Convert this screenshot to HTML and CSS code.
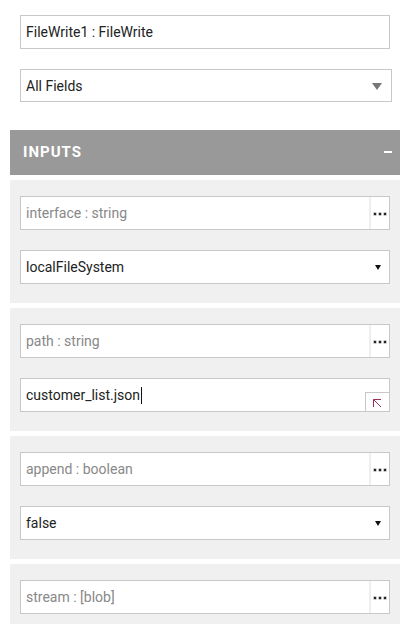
FILE: index.html
```html
<!DOCTYPE html>
<html>
<head>
<meta charset="utf-8">
<link rel="stylesheet" href="styles.css">
</head>
<body>
<div class="page">
  <div class="top">
    <div class="field name-field"><span class="value">FileWrite1 : FileWrite</span></div>
    <div class="field filter-select"><span class="value">All Fields</span><span class="big-arrow"></span></div>
  </div>
  <div class="header"><span class="title">INPUTS</span><span class="minus"></span></div>
  <div class="section">
    <div class="field with-btn"><span class="placeholder">interface : string</span><span class="dots-btn"><i></i><i></i><i></i></span></div>
    <div class="field select"><span class="value">localFileSystem</span><span class="small-arrow"></span></div>
  </div>
  <div class="section">
    <div class="field with-btn"><span class="placeholder">path : string</span><span class="dots-btn"><i></i><i></i><i></i></span></div>
    <div class="field textarea"><span class="value">customer_list.json</span><span class="caret"></span>
      <span class="expand-btn"><svg width="9" height="9" viewBox="0 0 9 9"><path d="M0.5 0.5H8M0.5 0.5V8M0.5 0.5L8 8" fill="none" stroke="#9a2f5e" stroke-width="1"/></svg></span>
    </div>
  </div>
  <div class="section">
    <div class="field with-btn"><span class="placeholder">append : boolean</span><span class="dots-btn"><i></i><i></i><i></i></span></div>
    <div class="field select"><span class="value">false</span><span class="small-arrow"></span></div>
  </div>
  <div class="section last">
    <div class="field with-btn"><span class="placeholder">stream : [blob]</span><span class="dots-btn"><i></i><i></i><i></i></span></div>
  </div>
</div>
</body>
</html>
```
FILE: styles.css
```css
html, body {
  margin: 0;
  padding: 0;
  background: #fff;
}
body {
  font-family: Roboto, "Liberation Sans", Arial, sans-serif;
  font-size: 14px;
  color: #222;
}
.page {
  width: 390px;
  padding: 15px 10px 0 10px;
}
.top {
  padding: 0 10px;
  display: flex;
  flex-direction: column;
  gap: 20px;
  margin-bottom: 28px;
}
.field {
  position: relative;
  box-sizing: border-box;
  height: 34px;
  border: 1px solid #c8c8c8;
  background: #fff;
  display: flex;
  align-items: center;
  padding-left: 5px;
}
.name-field {
  width: 370px;
}
.filter-select {
  width: 372px;
  height: 33px;
  justify-content: space-between;
  padding-right: 9px;
}
.big-arrow {
  width: 0;
  height: 0;
  border-left: 5px solid transparent;
  border-right: 5px solid transparent;
  border-top: 7px solid #777;
  margin-top: 2px;
}
.header {
  height: 45px;
  background: #999;
  display: flex;
  align-items: center;
  justify-content: space-between;
  padding: 0 8px 0 13px;
  margin-bottom: 5px;
}
.title {
  color: #fff;
  font-weight: bold;
  font-size: 15px;
  letter-spacing: 1px;
  margin-top: -2px;
}
.minus {
  width: 8px;
  height: 2px;
  background: #fff;
  margin-top: -1px;
}
.section {
  background: #f0f0f0;
  padding: 16px 10px 19px 10px;
  display: flex;
  flex-direction: column;
  gap: 20px;
  margin-bottom: 5px;
}
.section.last {
  padding-bottom: 10px;
}
.placeholder {
  color: #888;
}
.with-btn {
  padding-right: 0;
}
.with-btn .placeholder {
  flex: 1;
}
.dots-btn {
  align-self: stretch;
  width: 18px;
  border-left: 2px solid #eee;
  display: flex;
  align-items: center;
  justify-content: center;
  gap: 3px;
  padding-top: 1px;
}
.dots-btn i {
  display: block;
  width: 2px;
  height: 2px;
  background: #222;
  box-shadow: 0 0 0 0.5px rgba(34, 34, 34, 0.5);
}
.select {
  justify-content: space-between;
  padding-right: 8px;
}
.small-arrow {
  width: 0;
  height: 0;
  border-left: 3px solid transparent;
  border-right: 3px solid transparent;
  border-top: 5px solid #111;
  margin-top: 1px;
}
.caret {
  display: inline-block;
  width: 1px;
  height: 17px;
  background: #111;
  margin-left: 1px;
}
.expand-btn {
  position: absolute;
  right: -1px;
  bottom: -1px;
  box-sizing: border-box;
  width: 25px;
  height: 20px;
  border: 1px solid #c8c8c8;
  background: #fff;
  display: flex;
  align-items: center;
  justify-content: center;
  padding-top: 2px;
}
.expand-btn svg {
  display: block;
}
```
